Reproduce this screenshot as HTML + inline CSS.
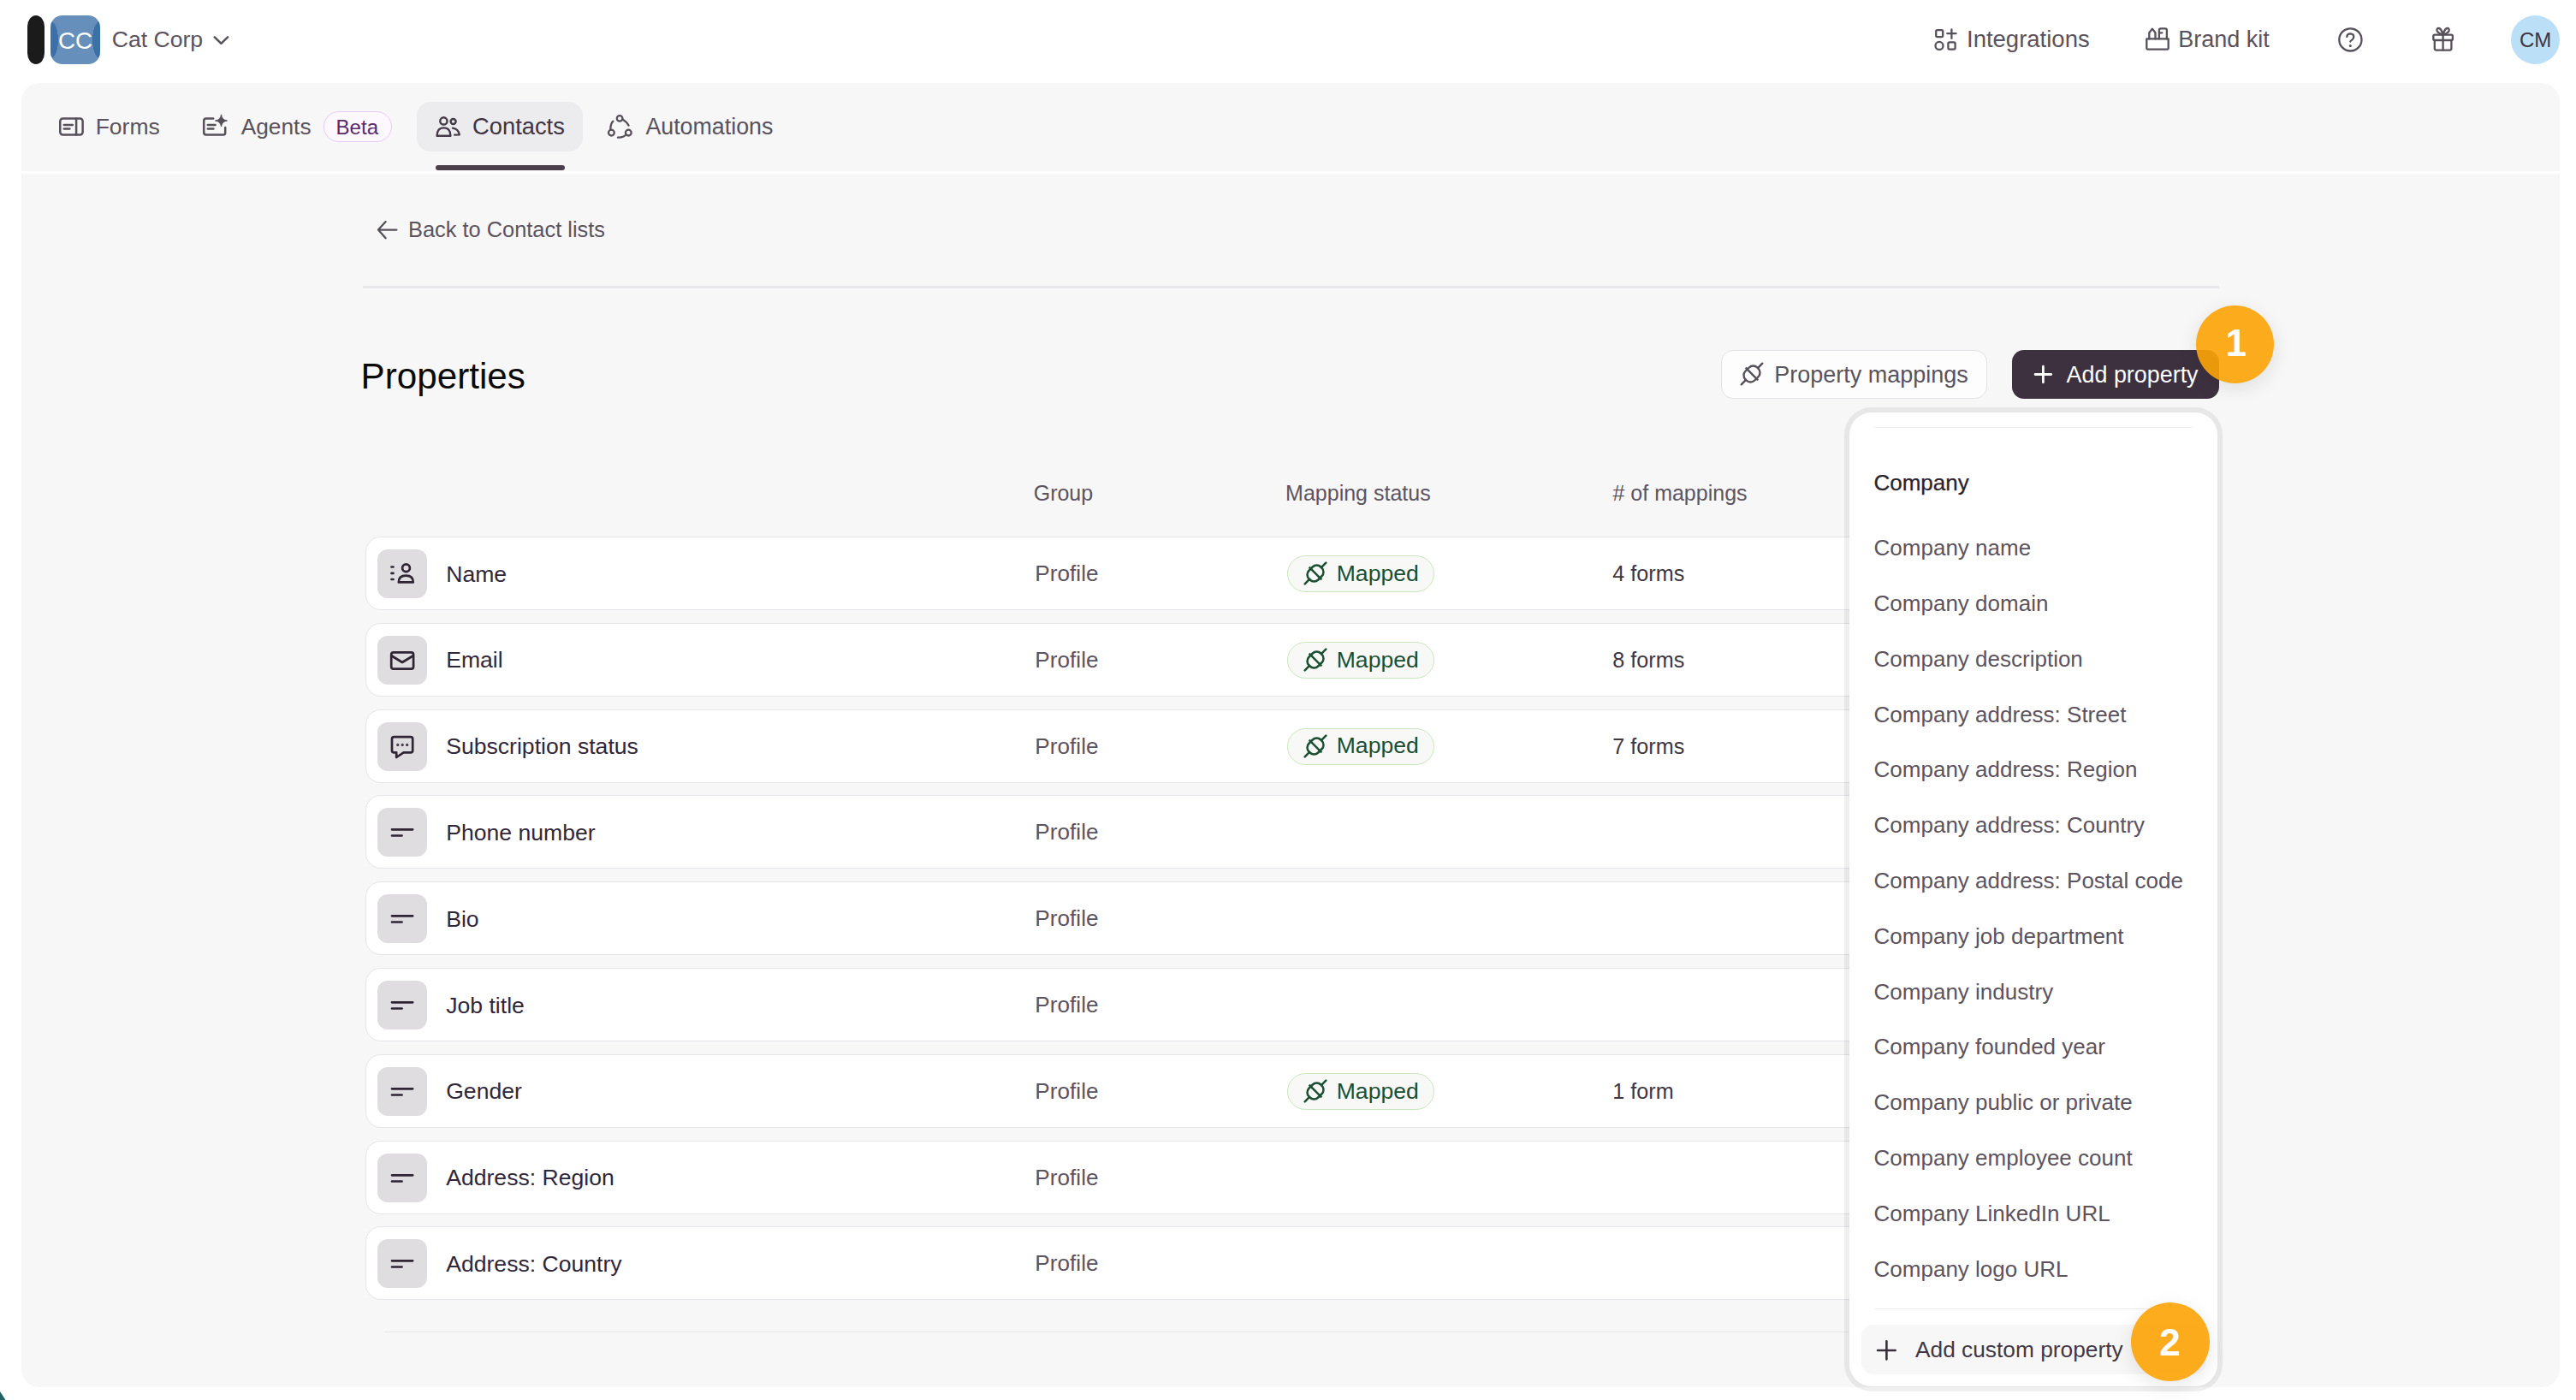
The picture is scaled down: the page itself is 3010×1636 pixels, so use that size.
<!DOCTYPE html>
<html><head><meta charset="utf-8"><title>Properties</title>
<style>
html,body{margin:0;padding:0;}
body{width:3010px;height:1636px;position:relative;overflow:hidden;background:#ffffff;font-family:"Liberation Sans", sans-serif;}
.t{position:absolute;white-space:nowrap;line-height:1;}
.i{position:absolute;overflow:visible;}
</style></head><body>
<div style="position:absolute;left:32px;top:18px;width:20px;height:57px;border-radius:10px/13px;background:#1b1b1b"></div>
<div style="position:absolute;left:59px;top:18px;width:58px;height:57px;border-radius:14px;background:radial-gradient(ellipse 9px 22px at 0% 50%,#3b71a7 98%,transparent 100%),radial-gradient(ellipse 9px 22px at 100% 50%,#3b71a7 98%,transparent 100%),#6690bb;overflow:hidden"></div>
<div class="t" style="left:68.0px;top:34px;font-size:27.8px;color:#ffffff;">CC</div>
<div class="t" style="left:130.7px;top:33px;font-size:26.6px;color:#5a525c;">Cat Corp</div>
<svg class="i" style="left:240px;top:30px" width="40" height="34" viewBox="0 0 40 34"><path d="M10.7 13.3 L18.4 20.9 L26.1 13.3" fill="none" stroke="#57505a" stroke-width="2.4" stroke-linecap="round" stroke-linejoin="round"/></svg>
<svg class="i" style="left:2253px;top:26px" width="40" height="40" viewBox="0 0 40 40" fill="none" stroke="#57505a" stroke-width="2.3" stroke-linecap="round" stroke-linejoin="round">
<rect x="9.2" y="9.2" width="8" height="8" rx="1.6"/><path d="M27.4 8.3 V18.9 M22.2 13.1 H32.6"/>
<circle cx="13" cy="27.4" r="4.5"/><rect x="23.4" y="23.4" width="8.2" height="8.2" rx="1.6"/></svg>
<div class="t" style="left:2298.0px;top:32px;font-size:27.5px;color:#5a525c;">Integrations</div>
<svg class="i" style="left:2500px;top:26px" width="40" height="40" viewBox="0 0 40 40" fill="none" stroke="#57505a" stroke-width="2.3" stroke-linecap="round" stroke-linejoin="round">
<path d="M8.3 19.4 H33.7 V30.6 Q33.7 31.6 32.7 31.6 H9.3 Q8.3 31.6 8.3 30.6 Z"/>
<path d="M11.3 19.4 V12.2 L14.9 7.6 L18.5 12.2 V19.4"/>
<path d="M22.9 19.4 V9.3 Q22.9 7.3 24.9 7.3 H29.9 Q31.9 7.3 31.9 9.3 V19.4"/>
<path d="M23.2 12.3 H26.4"/></svg>
<div class="t" style="left:2545.3px;top:33px;font-size:27.0px;color:#5a525c;">Brand kit</div>
<svg class="i" style="left:2726px;top:26px" width="40" height="40" viewBox="0 0 40 40" fill="none" stroke="#57505a" stroke-width="2.3" stroke-linecap="round" stroke-linejoin="round">
<circle cx="20.4" cy="20.4" r="13.1"/><path d="M16.3 16.9 Q16.6 13.4 20.3 13.4 Q24.3 13.6 24.3 17 Q24.3 19 22.3 20.6 Q20.3 22 20.3 22.6"/>
<circle cx="20.3" cy="27.4" r="1.5" fill="#57505a" stroke="none"/></svg>
<svg class="i" style="left:2835px;top:26px" width="40" height="40" viewBox="0 0 40 40" fill="none" stroke="#57505a" stroke-width="2.3" stroke-linecap="round" stroke-linejoin="round">
<rect x="8.3" y="14.6" width="22.6" height="6.4" rx="1.6"/><path d="M9.8 21 V30.6 Q9.8 32.6 11.8 32.6 H27.4 Q29.4 32.6 29.4 30.6 V21"/>
<path d="M19.6 14.6 V32.6"/><path d="M19.6 14.6 Q14 13 12.6 10 Q12 7 14.5 7 Q17.5 7 19.6 14.6 Q21.7 7 24.7 7 Q27.2 7 26.6 10 Q25.2 13 19.6 14.6"/></svg>
<div style="position:absolute;left:2934px;top:18px;width:57px;height:57px;border-radius:50%;background:#bcdff8"></div>
<div class="t" style="left:2944.0px;top:35px;font-size:24.0px;color:#3f3641;">CM</div>
<div style="position:absolute;left:25px;top:97px;width:2966px;height:1524px;border-radius:21px;background:#f7f7f7"></div>
<div style="position:absolute;left:25px;top:200px;width:2966px;height:3px;background:#ffffff"></div>
<svg class="i" style="left:60px;top:125px" width="50" height="45" viewBox="0 0 50 45" fill="none" stroke="#57505a" stroke-width="2.5" stroke-linecap="round" stroke-linejoin="round">
<rect x="10.25" y="13.45" width="26.4" height="19.1" rx="3.2"/><path d="M29.1 13.5 V32.5"/><path d="M14.8 21 H24.8 M14.8 25.6 H21.4"/></svg>
<div class="t" style="left:111.7px;top:135px;font-size:26.5px;color:#5a525c;">Forms</div>
<svg class="i" style="left:230px;top:125px" width="45" height="45" viewBox="0 0 45 45" fill="none" stroke="#57505a" stroke-width="2.5" stroke-linecap="round" stroke-linejoin="round">
<path d="M19.2 13.5 H10.9 Q8.2 13.5 8.2 16.2 V29.8 Q8.2 32.5 10.9 32.5 H31.2 Q33.2 32.5 33.2 30 V24"/>
<path d="M12.8 21 H21.6 M12.8 25.6 H19.4"/></svg>
<svg class="i" style="left:230px;top:125px" width="45" height="45" viewBox="0 0 45 45"><path d="M28.5 8.9 Q29.3 15.2 35.5 16 Q29.3 16.8 28.5 23 Q27.7 16.8 21.5 16 Q27.7 15.2 28.5 8.9 Z" fill="#57505a" stroke="#57505a" stroke-width="1" stroke-linejoin="round"/></svg>
<div class="t" style="left:281.7px;top:135px;font-size:26.3px;color:#5a525c;">Agents</div>
<div style="position:absolute;left:378px;top:130px;width:80px;height:36px;box-sizing:border-box;border-radius:18px;border:1.5px solid #e9c9f6;background:#fdf8fe"></div>
<div class="t" style="left:392.5px;top:137px;font-size:24.1px;color:#5b2a6c;">Beta</div>
<div style="position:absolute;left:487px;top:119px;width:194px;height:58px;border-radius:16px;background:#ececee"></div>
<svg class="i" style="left:503px;top:128px" width="40" height="40" viewBox="0 0 40 40" fill="none" stroke="#463b48" stroke-width="2.4" stroke-linecap="round" stroke-linejoin="round">
<circle cx="15.4" cy="13.4" r="4.1"/><circle cx="26.6" cy="14" r="3"/>
<path d="M7.6 30.8 Q7.6 21.4 15.5 21.4 Q23.4 21.4 23.4 30.8 Z"/><path d="M26 21.6 Q32.6 22.5 33.8 29.4 L28.2 29.6"/></svg>
<div class="t" style="left:552.1px;top:134px;font-size:27.3px;color:#3f3442;">Contacts</div>
<div style="position:absolute;left:509px;top:193px;width:151px;height:6px;border-radius:3px;background:#4a3f4b"></div>
<svg class="i" style="left:703px;top:128px" width="40" height="40" viewBox="0 0 40 40" fill="none" stroke="#57505a" stroke-width="2.3" stroke-linecap="round" stroke-linejoin="round">
<circle cx="21.1" cy="10.4" r="3.3"/><circle cx="11.4" cy="27.1" r="3.4"/><circle cx="31.3" cy="27.1" r="3.4"/>
<path d="M13.4 13.7 Q10.3 16.5 10.3 23.7"/><path d="M24.6 11.6 Q29.3 14.5 31.6 18.6"/><path d="M18.9 32.6 Q25.6 33 28.3 29.4"/></svg>
<div class="t" style="left:754.4px;top:135px;font-size:26.8px;color:#5a525c;">Automations</div>
<svg class="i" style="left:430px;top:250px" width="40" height="40" viewBox="0 0 40 40" fill="none" stroke="#57505a" stroke-width="2.3" stroke-linecap="round" stroke-linejoin="round"><path d="M20.6 9.1 L12 18.6 L20.6 28.3 M12.3 18.6 H33.4"/></svg>
<div class="t" style="left:477.0px;top:256px;font-size:25.4px;color:#5c535d;">Back to Contact lists</div>
<div style="position:absolute;left:424px;top:334px;width:2169px;height:3px;background:#e8e7ea"></div>
<div class="t" style="left:421.6px;top:419px;font-size:42.2px;color:#0a0a0a;">Properties</div>
<div style="position:absolute;left:2011px;top:409px;width:311px;height:57px;box-sizing:border-box;border-radius:14px;border:1.5px solid #e2e1e4;background:#fdfdfd"></div>
<svg class="i" style="left:2027px;top:417px" width="40" height="40" viewBox="0 0 40 40" fill="none" stroke="#57505a" stroke-width="2.4" stroke-linecap="round" stroke-linejoin="round"><g transform="translate(20 20) rotate(-45)">
<path d="M-17.4 0 H-9.8 M9.8 0 H17.4"/><rect x="-9.8" y="-7.6" width="19.6" height="15.2" rx="6.8"/><path d="M0 -10.3 V10.3" stroke-linecap="butt"/></g></svg>
<div class="t" style="left:2073.2px;top:425px;font-size:27.0px;color:#5a525c;">Property mappings</div>
<div style="position:absolute;left:2351px;top:409px;width:242px;height:57px;border-radius:14px;background:#3d313f"></div>
<svg class="i" style="left:2365px;top:417px" width="40" height="40" viewBox="0 0 40 40" fill="none" stroke="#ffffff" stroke-width="2.8" stroke-linecap="round"><path d="M22.4 11.2 V29.8 M13.1 20.5 H31.7"/></svg>
<div class="t" style="left:2414.6px;top:425px;font-size:26.9px;color:#ffffff;">Add property</div>
<div class="t" style="left:1207.7px;top:564px;font-size:25.0px;color:#5d545f;">Group</div>
<div class="t" style="left:1502.1px;top:564px;font-size:25.0px;color:#5d545f;">Mapping status</div>
<div class="t" style="left:1884.5px;top:564px;font-size:25.0px;color:#5d545f;"># of mappings</div>
<div style="position:absolute;left:427px;top:627.0px;width:2150px;height:86px;box-sizing:border-box;border-radius:18px;border:1.5px solid #e5e4e7;background:#ffffff"></div>
<div style="position:absolute;left:441px;top:642.0px;width:58px;height:57px;border-radius:12px;background:#dfdde0"></div>
<svg class="i" style="left:441px;top:642.0px" width="58" height="57" viewBox="0 0 58 57" fill="none" stroke="#2f2533" stroke-width="2.7" stroke-linecap="round" stroke-linejoin="round"><path d="M16.5 20.5 H18.5 M16.5 27.9 H18.5 M16.5 35 H18.5"/><circle cx="33.5" cy="21.8" r="4.4"/><path d="M24.8 38.4 Q24.8 30.6 33.3 30.6 Q41.8 30.6 41.8 38.4 Z"/></svg>
<div class="t" style="left:521.2px;top:658px;font-size:26.6px;color:#31273a;">Name</div>
<div class="t" style="left:1209.3px;top:657px;font-size:26.2px;color:#5d545f;">Profile</div>
<div style="position:absolute;left:1504px;top:649.0px;width:172px;height:43px;box-sizing:border-box;border-radius:22px;border:1.5px solid #c9e7bd;background:#f8f9f6"></div>
<svg class="i" style="left:1517px;top:650.4px" width="40" height="40" viewBox="0 0 40 40" fill="none" stroke="#1b4f33" stroke-width="2.5" stroke-linecap="round" stroke-linejoin="round"><g transform="translate(20 20) rotate(-45)">
<path d="M-17.4 0 H-9.8 M9.8 0 H17.4"/><rect x="-9.8" y="-7.6" width="19.6" height="15.2" rx="6.8"/><path d="M0 -10.3 V10.3" stroke-linecap="butt"/></g></svg>
<div class="t" style="left:1561.7px;top:657px;font-size:26.6px;color:#1b4f33;">Mapped</div>
<div class="t" style="left:1884.3px;top:658px;font-size:25.2px;color:#3f3641;">4 forms</div>
<div style="position:absolute;left:427px;top:727.8px;width:2150px;height:86px;box-sizing:border-box;border-radius:18px;border:1.5px solid #e5e4e7;background:#ffffff"></div>
<div style="position:absolute;left:441px;top:742.8px;width:58px;height:57px;border-radius:12px;background:#dfdde0"></div>
<svg class="i" style="left:441px;top:742.8px" width="58" height="57" viewBox="0 0 58 57" fill="none" stroke="#2f2533" stroke-width="2.7" stroke-linecap="round" stroke-linejoin="round"><rect x="16.2" y="19.4" width="25.9" height="19.2" rx="2.6"/><path d="M16.8 23.5 L29 31 L41.4 23.5"/></svg>
<div class="t" style="left:521.2px;top:758px;font-size:26.6px;color:#31273a;">Email</div>
<div class="t" style="left:1209.3px;top:758px;font-size:26.2px;color:#5d545f;">Profile</div>
<div style="position:absolute;left:1504px;top:749.8px;width:172px;height:43px;box-sizing:border-box;border-radius:22px;border:1.5px solid #c9e7bd;background:#f8f9f6"></div>
<svg class="i" style="left:1517px;top:751.2px" width="40" height="40" viewBox="0 0 40 40" fill="none" stroke="#1b4f33" stroke-width="2.5" stroke-linecap="round" stroke-linejoin="round"><g transform="translate(20 20) rotate(-45)">
<path d="M-17.4 0 H-9.8 M9.8 0 H17.4"/><rect x="-9.8" y="-7.6" width="19.6" height="15.2" rx="6.8"/><path d="M0 -10.3 V10.3" stroke-linecap="butt"/></g></svg>
<div class="t" style="left:1561.7px;top:758px;font-size:26.6px;color:#1b4f33;">Mapped</div>
<div class="t" style="left:1884.3px;top:759px;font-size:25.2px;color:#3f3641;">8 forms</div>
<div style="position:absolute;left:427px;top:828.6px;width:2150px;height:86px;box-sizing:border-box;border-radius:18px;border:1.5px solid #e5e4e7;background:#ffffff"></div>
<div style="position:absolute;left:441px;top:843.6px;width:58px;height:57px;border-radius:12px;background:#dfdde0"></div>
<svg class="i" style="left:441px;top:843.6px" width="58" height="57" viewBox="0 0 58 57" fill="none" stroke="#2f2533" stroke-width="2.7" stroke-linecap="round" stroke-linejoin="round"><path d="M19.4 17.2 H38.8 Q41.2 17.2 41.2 19.6 V33 Q41.2 35.4 38.8 35.4 H30.6 L22.2 41 V35.4 H19.4 Q17 35.4 17 33 V19.6 Q17 17.2 19.4 17.2 Z"/><circle cx="23.8" cy="26.4" r="0.5" fill="#2f2533" stroke-width="2.2"/><circle cx="29.2" cy="26.4" r="0.5" fill="#2f2533" stroke-width="2.2"/><circle cx="34.7" cy="26.4" r="0.5" fill="#2f2533" stroke-width="2.2"/></svg>
<div class="t" style="left:521.2px;top:859px;font-size:26.6px;color:#31273a;">Subscription status</div>
<div class="t" style="left:1209.3px;top:859px;font-size:26.2px;color:#5d545f;">Profile</div>
<div style="position:absolute;left:1504px;top:850.6px;width:172px;height:43px;box-sizing:border-box;border-radius:22px;border:1.5px solid #c9e7bd;background:#f8f9f6"></div>
<svg class="i" style="left:1517px;top:852.0px" width="40" height="40" viewBox="0 0 40 40" fill="none" stroke="#1b4f33" stroke-width="2.5" stroke-linecap="round" stroke-linejoin="round"><g transform="translate(20 20) rotate(-45)">
<path d="M-17.4 0 H-9.8 M9.8 0 H17.4"/><rect x="-9.8" y="-7.6" width="19.6" height="15.2" rx="6.8"/><path d="M0 -10.3 V10.3" stroke-linecap="butt"/></g></svg>
<div class="t" style="left:1561.7px;top:858px;font-size:26.6px;color:#1b4f33;">Mapped</div>
<div class="t" style="left:1884.3px;top:860px;font-size:25.2px;color:#3f3641;">7 forms</div>
<div style="position:absolute;left:427px;top:929.4px;width:2150px;height:86px;box-sizing:border-box;border-radius:18px;border:1.5px solid #e5e4e7;background:#ffffff"></div>
<div style="position:absolute;left:441px;top:944.4px;width:58px;height:57px;border-radius:12px;background:#dfdde0"></div>
<svg class="i" style="left:441px;top:944.4px" width="58" height="57" viewBox="0 0 58 57" fill="none" stroke="#2f2533" stroke-width="2.7" stroke-linecap="round" stroke-linejoin="round"><path d="M17 25.3 H41.2 M17 32.5 H28.6" stroke-width="2.7"/></svg>
<div class="t" style="left:521.2px;top:960px;font-size:26.6px;color:#31273a;">Phone number</div>
<div class="t" style="left:1209.3px;top:959px;font-size:26.2px;color:#5d545f;">Profile</div>
<div style="position:absolute;left:427px;top:1030.2px;width:2150px;height:86px;box-sizing:border-box;border-radius:18px;border:1.5px solid #e5e4e7;background:#ffffff"></div>
<div style="position:absolute;left:441px;top:1045.2px;width:58px;height:57px;border-radius:12px;background:#dfdde0"></div>
<svg class="i" style="left:441px;top:1045.2px" width="58" height="57" viewBox="0 0 58 57" fill="none" stroke="#2f2533" stroke-width="2.7" stroke-linecap="round" stroke-linejoin="round"><path d="M17 25.3 H41.2 M17 32.5 H28.6" stroke-width="2.7"/></svg>
<div class="t" style="left:521.2px;top:1061px;font-size:26.6px;color:#31273a;">Bio</div>
<div class="t" style="left:1209.3px;top:1060px;font-size:26.2px;color:#5d545f;">Profile</div>
<div style="position:absolute;left:427px;top:1131.0px;width:2150px;height:86px;box-sizing:border-box;border-radius:18px;border:1.5px solid #e5e4e7;background:#ffffff"></div>
<div style="position:absolute;left:441px;top:1146.0px;width:58px;height:57px;border-radius:12px;background:#dfdde0"></div>
<svg class="i" style="left:441px;top:1146.0px" width="58" height="57" viewBox="0 0 58 57" fill="none" stroke="#2f2533" stroke-width="2.7" stroke-linecap="round" stroke-linejoin="round"><path d="M17 25.3 H41.2 M17 32.5 H28.6" stroke-width="2.7"/></svg>
<div class="t" style="left:521.2px;top:1162px;font-size:26.6px;color:#31273a;">Job title</div>
<div class="t" style="left:1209.3px;top:1161px;font-size:26.2px;color:#5d545f;">Profile</div>
<div style="position:absolute;left:427px;top:1231.8px;width:2150px;height:86px;box-sizing:border-box;border-radius:18px;border:1.5px solid #e5e4e7;background:#ffffff"></div>
<div style="position:absolute;left:441px;top:1246.8px;width:58px;height:57px;border-radius:12px;background:#dfdde0"></div>
<svg class="i" style="left:441px;top:1246.8px" width="58" height="57" viewBox="0 0 58 57" fill="none" stroke="#2f2533" stroke-width="2.7" stroke-linecap="round" stroke-linejoin="round"><path d="M17 25.3 H41.2 M17 32.5 H28.6" stroke-width="2.7"/></svg>
<div class="t" style="left:521.2px;top:1262px;font-size:26.6px;color:#31273a;">Gender</div>
<div class="t" style="left:1209.3px;top:1262px;font-size:26.2px;color:#5d545f;">Profile</div>
<div style="position:absolute;left:1504px;top:1253.8px;width:172px;height:43px;box-sizing:border-box;border-radius:22px;border:1.5px solid #c9e7bd;background:#f8f9f6"></div>
<svg class="i" style="left:1517px;top:1255.2px" width="40" height="40" viewBox="0 0 40 40" fill="none" stroke="#1b4f33" stroke-width="2.5" stroke-linecap="round" stroke-linejoin="round"><g transform="translate(20 20) rotate(-45)">
<path d="M-17.4 0 H-9.8 M9.8 0 H17.4"/><rect x="-9.8" y="-7.6" width="19.6" height="15.2" rx="6.8"/><path d="M0 -10.3 V10.3" stroke-linecap="butt"/></g></svg>
<div class="t" style="left:1561.7px;top:1262px;font-size:26.6px;color:#1b4f33;">Mapped</div>
<div class="t" style="left:1884.3px;top:1263px;font-size:25.2px;color:#3f3641;">1 form</div>
<div style="position:absolute;left:427px;top:1332.6px;width:2150px;height:86px;box-sizing:border-box;border-radius:18px;border:1.5px solid #e5e4e7;background:#ffffff"></div>
<div style="position:absolute;left:441px;top:1347.6px;width:58px;height:57px;border-radius:12px;background:#dfdde0"></div>
<svg class="i" style="left:441px;top:1347.6px" width="58" height="57" viewBox="0 0 58 57" fill="none" stroke="#2f2533" stroke-width="2.7" stroke-linecap="round" stroke-linejoin="round"><path d="M17 25.3 H41.2 M17 32.5 H28.6" stroke-width="2.7"/></svg>
<div class="t" style="left:521.2px;top:1363px;font-size:26.6px;color:#31273a;">Address: Region</div>
<div class="t" style="left:1209.3px;top:1363px;font-size:26.2px;color:#5d545f;">Profile</div>
<div style="position:absolute;left:427px;top:1433.4px;width:2150px;height:86px;box-sizing:border-box;border-radius:18px;border:1.5px solid #e5e4e7;background:#ffffff"></div>
<div style="position:absolute;left:441px;top:1448.4px;width:58px;height:57px;border-radius:12px;background:#dfdde0"></div>
<svg class="i" style="left:441px;top:1448.4px" width="58" height="57" viewBox="0 0 58 57" fill="none" stroke="#2f2533" stroke-width="2.7" stroke-linecap="round" stroke-linejoin="round"><path d="M17 25.3 H41.2 M17 32.5 H28.6" stroke-width="2.7"/></svg>
<div class="t" style="left:521.2px;top:1464px;font-size:26.6px;color:#31273a;">Address: Country</div>
<div class="t" style="left:1209.3px;top:1463px;font-size:26.2px;color:#5d545f;">Profile</div>
<div style="position:absolute;left:449px;top:1555.5px;width:2120px;height:1.5px;background:#e6e5e8"></div>
<div style="position:absolute;left:2155px;top:476px;width:442px;height:1150px;border-radius:32px;background:rgba(42,32,48,0.07)"></div>
<div style="position:absolute;left:2161px;top:482px;width:430px;height:1138px;border-radius:26px;background:#ffffff"></div>
<div style="position:absolute;left:2190px;top:499px;width:372px;height:1.2px;background:#ededef"></div>
<div class="t" style="left:2189.4px;top:551px;font-size:26.0px;color:#2b2230;-webkit-text-stroke:0.25px #2b2230;">Company</div>
<div class="t" style="left:2189.6px;top:627px;font-size:26.0px;color:#5c535e;">Company name</div>
<div class="t" style="left:2189.6px;top:692px;font-size:26.0px;color:#5c535e;">Company domain</div>
<div class="t" style="left:2189.6px;top:757px;font-size:26.0px;color:#5c535e;">Company description</div>
<div class="t" style="left:2189.6px;top:822px;font-size:26.0px;color:#5c535e;">Company address: Street</div>
<div class="t" style="left:2189.6px;top:886px;font-size:26.0px;color:#5c535e;">Company address: Region</div>
<div class="t" style="left:2189.6px;top:951px;font-size:26.0px;color:#5c535e;">Company address: Country</div>
<div class="t" style="left:2189.6px;top:1016px;font-size:26.0px;color:#5c535e;">Company address: Postal code</div>
<div class="t" style="left:2189.6px;top:1081px;font-size:26.0px;color:#5c535e;">Company job department</div>
<div class="t" style="left:2189.6px;top:1146px;font-size:26.0px;color:#5c535e;">Company industry</div>
<div class="t" style="left:2189.6px;top:1210px;font-size:26.0px;color:#5c535e;">Company founded year</div>
<div class="t" style="left:2189.6px;top:1275px;font-size:26.0px;color:#5c535e;">Company public or private</div>
<div class="t" style="left:2189.6px;top:1340px;font-size:26.0px;color:#5c535e;">Company employee count</div>
<div class="t" style="left:2189.6px;top:1405px;font-size:26.0px;color:#5c535e;">Company LinkedIn URL</div>
<div class="t" style="left:2189.6px;top:1470px;font-size:26.0px;color:#5c535e;">Company logo URL</div>
<div style="position:absolute;left:2190px;top:1528.5px;width:372px;height:1.5px;background:#ececee"></div>
<div style="position:absolute;left:2175px;top:1548px;width:402px;height:58px;border-radius:14px;background:#f7f7f8"></div>
<svg class="i" style="left:2184px;top:1558px" width="40" height="40" viewBox="0 0 40 40" fill="none" stroke="#3a2f3c" stroke-width="2.6" stroke-linecap="round"><path d="M20.4 9.4 V30.4 M10 20 H30.7"/></svg>
<div class="t" style="left:2238.0px;top:1564px;font-size:26.3px;color:#433846;">Add custom property</div>
<div style="position:absolute;left:2565.5px;top:356.5px;width:91px;height:91px;border-radius:50%;background:#fda408;opacity:0.91;box-shadow:0 6px 22px rgba(0,0,0,0.10)"></div>
<div class="t" style="left:2600.5px;top:379px;font-size:44px;color:#ffffff;font-weight:bold;">1</div>
<div style="position:absolute;left:2490.0px;top:1522.0px;width:92px;height:92px;border-radius:50%;background:#fda408;opacity:0.91;box-shadow:0 6px 22px rgba(0,0,0,0.10)"></div>
<div class="t" style="left:2523.2px;top:1547px;font-size:44px;color:#ffffff;font-weight:bold;">2</div>
<svg class="i" style="left:0;top:1620px" width="20" height="16" viewBox="0 0 20 16"><path d="M0 6 L6.5 16 H0 Z" fill="#1f6262"/></svg>

</body></html>
